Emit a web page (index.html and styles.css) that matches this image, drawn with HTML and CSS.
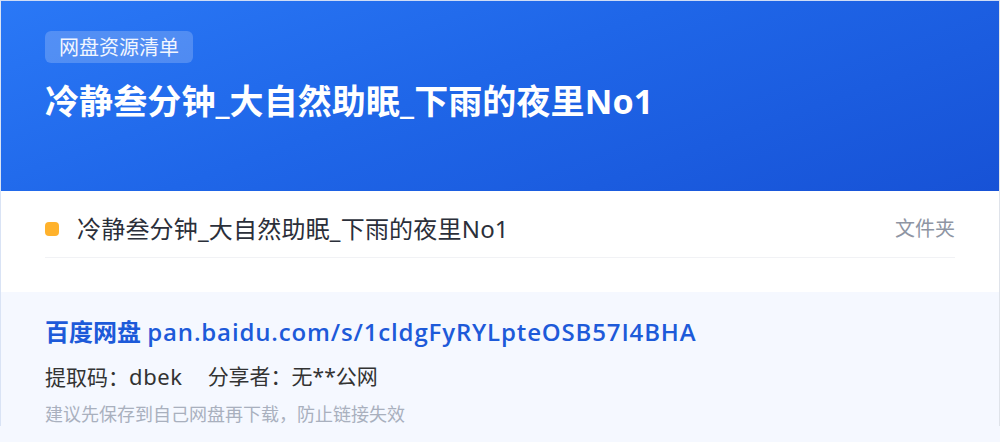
FILE: index.html
```html
<!DOCTYPE html>
<html lang="zh-CN">
<head>
<meta charset="utf-8">
<title>网盘资源清单</title>
<link rel="stylesheet" href="styles.css">
</head>
<body>
<div class="card">
  <header class="hero">
    <span class="tag">网盘资源清单</span>
    <h1 class="title">冷静叁分钟_大自然助眠_下雨的夜里No1</h1>
  </header>
  <section class="list">
    <div class="row">
      <span class="dot"></span>
      <span class="name">冷静叁分钟_大自然助眠_下雨的夜里No1</span>
      <span class="type">文件夹</span>
    </div>
  </section>
  <section class="info">
    <div class="link">百度网盘 <span class="url">pan.baidu.com/s/1cldgFyRYLpteOSB57I4BHA</span></div>
    <div class="meta"><span>提取码：<span class="code">dbek</span></span><span>分享者：无**公网</span></div>
    <div class="note">建议先保存到自己网盘再下载，防止链接失效</div>
  </section>
</div>
</body>
</html>
```

FILE: styles.css
```css
* { box-sizing: border-box; }
html, body {
  margin: 0;
  padding: 0;
  background: #f5f8ff;
}
body {
  font-family: "Noto Sans", "Noto Sans CJK SC", sans-serif;
  width: 1000px;
  height: 442px;
  overflow: hidden;
}
.card {
  width: 1000px;
  border-left: 1px solid #d9e3f5;
  border-right: 1px solid #dfe3ea;
  border-top: 1px solid #cfdcf5;
}
.hero {
  height: 190px;
  background: linear-gradient(160deg, #2a78f6 0%, #1f66e8 45%, #1752d6 100%);
  padding: 30px 44px 0;
  display: flex;
  flex-direction: column;
  align-items: flex-start;
}
.tag {
  display: inline-block;
  background: rgba(255, 255, 255, 0.2);
  color: #f2f6ff;
  font-family: "Noto Sans CJK SC", sans-serif;
  font-size: 20px;
  line-height: 24px;
  padding: 4px 14px;
  border-radius: 6px;
}
.title {
  margin: 14px 0 0;
  color: #ffffff;
  font-family: "Noto Sans", "Noto Sans CJK SC", sans-serif;
  font-weight: 700;
  font-size: 34px;
  line-height: 48px;
  letter-spacing: 0.1px;
}
.list {
  background: #ffffff;
  padding: 21px 44px 34px;
}
.row {
  display: flex;
  align-items: center;
  padding-bottom: 11px;
  border-bottom: 1px solid #f1f2f5;
}
.dot {
  width: 14px;
  height: 14px;
  border-radius: 4px;
  background: #ffb22c;
  flex: none;
  margin-right: 18px;
}
.name {
  flex: 1;
  color: #2b2f3a;
  font-size: 24px;
  line-height: 34px;
  letter-spacing: 0.2px;
}
.type {
  color: #8e95a3;
  font-size: 20px;
  line-height: 34px;
}
.info {
  background: #f5f8ff;
  padding: 24px 44px 0;
}
.link {
  color: #1d5ad9;
  font-weight: 600;
  font-size: 24px;
  line-height: 32px;
}
.url {
  font-family: "Open Sans", "Noto Sans", sans-serif;
  letter-spacing: 0.85px;
}
.meta {
  margin-top: 13px;
  color: #333333;
  font-size: 21px;
  line-height: 30px;
  display: flex;
  gap: 25px;
}
.code {
  font-size: 22px;
  letter-spacing: 0.6px;
}
.note {
  margin-top: 10px;
  color: #a9b0be;
  font-size: 18px;
  line-height: 24px;
}
```
